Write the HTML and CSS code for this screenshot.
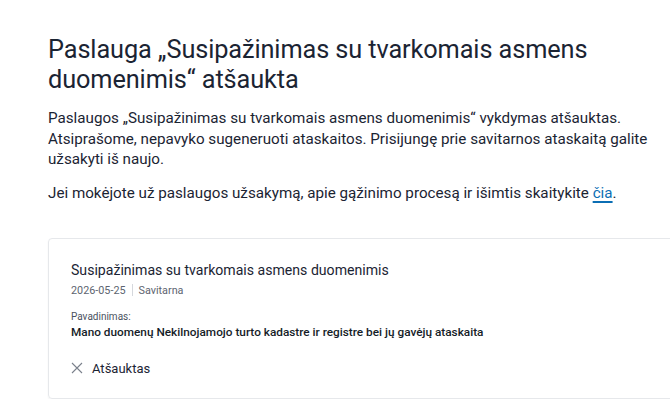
FILE: index.html
```html
<!DOCTYPE html>
<html lang="lt">
<head>
<meta charset="utf-8">
<link rel="stylesheet" href="styles.css">
</head>
<body>
<main class="page">
  <h1 class="title">Paslauga „Susipažinimas su tvarkomais asmens duomenimis“ atšaukta</h1>
  <div class="intro">
    <p>Paslaugos „Susipažinimas su tvarkomais asmens duomenimis“ vykdymas atšauktas. Atsiprašome, nepavyko sugeneruoti ataskaitos. Prisijungę prie savitarnos ataskaitą galite užsakyti iš naujo.</p>
    <p>Jei mokėjote už paslaugos užsakymą, apie gąžinimo procesą ir išimtis skaitykite <a href="#" class="link">čia</a>.</p>
  </div>
  <section class="card">
    <h2 class="card-title">Susipažinimas su tvarkomais asmens duomenimis</h2>
    <div class="meta"><span>2026-05-25</span><span class="sep"></span><span>Savitarna</span></div>
    <div class="label">Pavadinimas:</div>
    <div class="value">Mano duomenų Nekilnojamojo turto kadastre ir registre bei jų gavėjų ataskaita</div>
    <div class="status">
      <svg class="x-icon" width="12" height="12" viewBox="0 0 12 12"><path d="M1 1L11 11M11 1L1 11" stroke="#7a818c" stroke-width="1.1" fill="none"/></svg>
      <span>Atšauktas</span>
    </div>
  </section>
</main>
</body>
</html>
```
FILE: styles.css
```css
html, body {
  margin: 0;
  padding: 0;
  background: #fff;
  overflow: hidden;
}
body {
  font-family: Roboto, "Liberation Sans", sans-serif;
  color: #1b2433;
}
.page {
  padding: 35px 0 0 48px;
  width: 640px;
}
.title {
  margin: 0;
  width: 590px;
  font-size: 25.3px;
  line-height: 30px;
  font-weight: 400;
  letter-spacing: -0.1px;
}
.intro {
  margin-top: 13px;
  width: 600px;
  font-size: 15.2px;
  line-height: 20.5px;
}
.intro p {
  margin: 0 0 13.5px;
}
.link {
  color: #0b6eb4;
  text-decoration: underline;
  text-decoration-thickness: 1.5px;
  text-underline-offset: 3px;
}
.card {
  margin-top: 34px;
  width: 660px;
  box-sizing: border-box;
  border: 1px solid #e6e8eb;
  border-radius: 4px;
  padding: 22px 22px 22px;
  box-shadow: 0 1px 2px rgba(0,0,0,0.05);
}
.card-title {
  margin: 0;
  font-size: 14.1px;
  line-height: 18px;
  font-weight: 400;
}
.meta {
  margin-top: 5px;
  display: flex;
  align-items: center;
  gap: 6px;
  font-size: 10.8px;
  color: #5d6470;
}
.sep {
  width: 1px;
  height: 12px;
  background: #d5d8dd;
}
.label {
  margin-top: 14px;
  font-size: 10px;
  color: #4b5260;
}
.value {
  margin-top: 3px;
  font-size: 11.8px;
  font-weight: 500;
  color: #151c28;
}
.status {
  margin-top: 22px;
  display: flex;
  align-items: center;
  gap: 9px;
  font-size: 13px;
}
.x-icon {
  display: block;
}
```
